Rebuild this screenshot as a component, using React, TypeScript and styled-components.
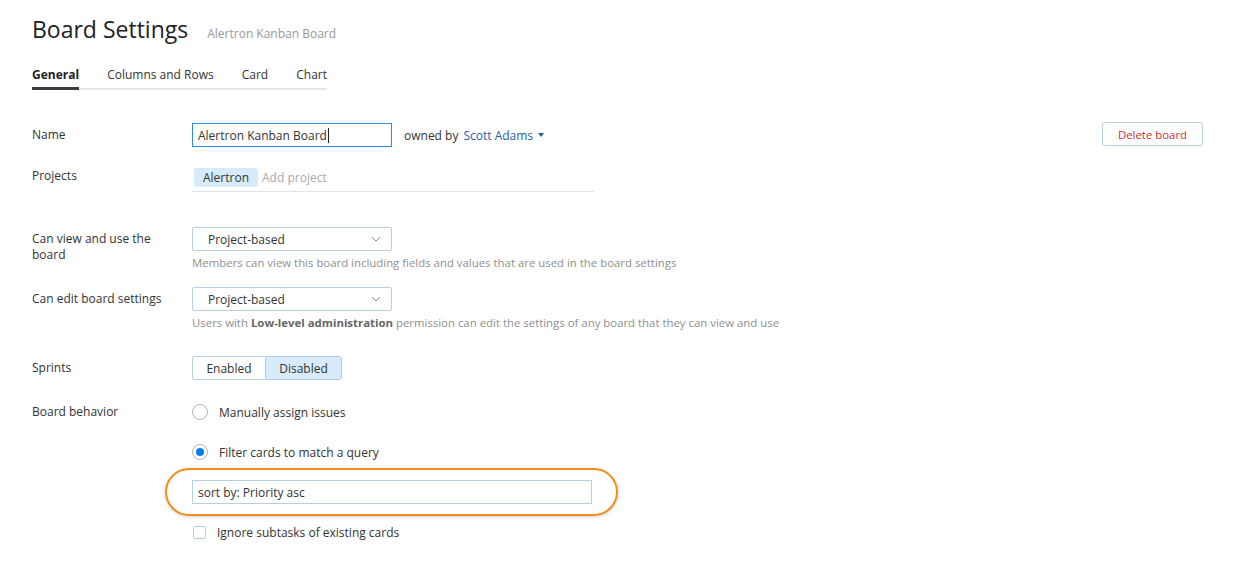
import styled, { createGlobalStyle } from 'styled-components';

const GlobalStyle = createGlobalStyle`
  body {
    margin: 0;
    background: #fff;
    font-family: 'Open Sans', 'Noto Sans', sans-serif;
    color: #333;
  }
`;

const Page = styled.div`
  padding: 14px 32px 30px 32px;
  font-size: 12px;
`;

const Header = styled.div`
  display: flex;
  align-items: baseline;
  gap: 19px;
`;

const Title = styled.h1`
  margin: 0;
  font-size: 23px;
  font-weight: 400;
  line-height: 30px;
  color: #222;
`;

const Subtitle = styled.span`
  font-size: 12px;
  color: #999;
`;

const TabList = styled.div`
  display: flex;
  gap: 28px;
  width: fit-content;
  margin-top: 22px;
  border-bottom: 2px solid #e6e6e6;
`;

const Tab = styled.div<{ $active?: boolean }>`
  font-size: 12px;
  line-height: 18px;
  white-space: nowrap;
  padding-bottom: 3px;
  margin-bottom: -2px;
  border-bottom: 3px solid ${(p) => (p.$active ? '#3d3d3d' : 'transparent')};
  font-weight: ${(p) => (p.$active ? 700 : 400)};
  color: ${(p) => (p.$active ? '#222' : '#333')};
`;

const Form = styled.div`
  margin-top: 33px;
  display: flex;
  flex-direction: column;
`;

const Row = styled.div<{ $gap: number }>`
  display: grid;
  grid-template-columns: 160px 1fr auto;
  align-items: start;
  margin-top: ${(p) => p.$gap}px;
`;

const Label = styled.div<{ $pad?: number }>`
  font-size: 12px;
  line-height: 16px;
  padding-top: ${(p) => p.$pad ?? 4}px;
  color: #333;
  width: 130px;
`;

const Control = styled.div`
  display: flex;
  flex-direction: column;
`;

const Inline = styled.div`
  display: flex;
  align-items: center;
  gap: 12px;
`;

const TextInput = styled.div<{ $focused?: boolean; $width: number }>`
  box-sizing: border-box;
  width: ${(p) => p.$width}px;
  height: 24px;
  border: 1px solid ${(p) => (p.$focused ? '#2a8de0' : '#b5cfe3')};
  padding: 0 5px;
  display: flex;
  align-items: center;
  font-size: 12px;
  color: #333;
  background: #fff;
`;

const Caret = styled.span`
  display: inline-block;
  width: 1px;
  height: 15px;
  background: #222;
  margin-left: 1px;
`;

const Owner = styled.span`
  color: #333;
  display: flex;
  align-items: center;
  gap: 5px;
`;

const Link = styled.span`
  color: #1f62a8;
`;

const DeleteButton = styled.button`
  box-sizing: border-box;
  width: 101px;
  height: 24px;
  border: 1px solid #b7d0e6;
  border-radius: 3px;
  background: #fff;
  color: #c8303a;
  font-family: inherit;
  font-size: 11.4px;
  cursor: pointer;
  margin-top: -1px;
`;

const TagInput = styled.div`
  width: 400px;
  display: flex;
  align-items: center;
  gap: 4px;
  padding: 2px 0 4px 2px;
  border-bottom: 1px solid #dde3ea;
`;

const Tag = styled.span`
  background: #d7ebfa;
  border-radius: 3px;
  padding: 0 9px;
  line-height: 19px;
  color: #333;
`;

const Placeholder = styled.span`
  color: #aaa;
`;

const Select = styled.div`
  box-sizing: border-box;
  width: 200px;
  height: 24px;
  border: 1px solid #b7d0e6;
  border-radius: 2px;
  padding: 0 10px 0 15px;
  display: flex;
  align-items: center;
  justify-content: space-between;
  color: #333;
`;

const Help = styled.div`
  margin-top: 5px;
  font-size: 11.4px;
  line-height: 14px;
  color: #8f8f8f;

  b {
    color: #666;
    font-weight: 700;
  }
`;

const Toggle = styled.div`
  display: flex;
`;

const ToggleButton = styled.div<{ $active?: boolean; $width: number }>`
  box-sizing: border-box;
  width: ${(p) => p.$width}px;
  height: 24px;
  display: flex;
  align-items: center;
  justify-content: center;
  border: 1px solid ${(p) => (p.$active ? '#a9cdeb' : '#b7d0e6')};
  background: ${(p) => (p.$active ? '#d7ebfa' : '#fff')};
  color: #333;

  &:first-child {
    border-radius: 3px 0 0 3px;
    border-right: none;
  }
  &:last-child {
    border-radius: 0 3px 3px 0;
  }
`;

const Options = styled.div`
  display: flex;
  flex-direction: column;
`;

const Option = styled.div<{ $gap?: number }>`
  display: flex;
  align-items: center;
  gap: 11px;
  height: 20px;
  margin-top: ${(p) => p.$gap ?? 0}px;
  font-size: 12px;
`;

const Radio = styled.span<{ $checked?: boolean }>`
  box-sizing: border-box;
  width: 16px;
  height: 16px;
  border-radius: 50%;
  border: 1px solid #b3b3b3;
  display: flex;
  align-items: center;
  justify-content: center;

  &::after {
    content: '';
    width: 8px;
    height: 8px;
    border-radius: 50%;
    background: ${(p) => (p.$checked ? '#0a7cf5' : 'transparent')};
  }
`;

const Checkbox = styled.span`
  box-sizing: border-box;
  width: 13px;
  height: 13px;
  margin-left: 1px;
  border: 1px solid #b7cfe4;
  border-radius: 2px;
`;

const QueryWrap = styled.div`
  position: relative;
  margin-top: 18px;
  width: 400px;
`;

const Highlight = styled.div`
  position: absolute;
  inset: -12px -26px -12px -27px;
  border: 2px solid #f58a1f;
  border-radius: 24px;
  box-shadow: 0 1px 3px rgba(0, 0, 0, 0.18);
  pointer-events: none;
`;

const Chevron = () => (
  <svg width="10" height="6" viewBox="0 0 10 6">
    <path d="M1 1l4 4 4-4" fill="none" stroke="#8a8a8a" strokeWidth="1" />
  </svg>
);

const Caretdown = () => (
  <svg width="6" height="4" viewBox="0 0 6 4">
    <path d="M0 0h6L3 4z" fill="#1f62a8" />
  </svg>
);

export default function App() {
  return (
    <Page>
      <GlobalStyle />
      <Header>
        <Title>Board Settings</Title>
        <Subtitle>Alertron Kanban Board</Subtitle>
      </Header>
      <TabList>
        <Tab $active>General</Tab>
        <Tab>Columns and Rows</Tab>
        <Tab>Card</Tab>
        <Tab>Chart</Tab>
      </TabList>

      <Form>
        <Row $gap={0}>
          <Label>Name</Label>
          <Inline>
            <TextInput $focused $width={200}>
              Alertron Kanban Board<Caret />
            </TextInput>
            <Owner>
              owned by <Link>Scott Adams</Link>
              <Caretdown />
            </Owner>
          </Inline>
          <DeleteButton>Delete board</DeleteButton>
        </Row>

        <Row $gap={19}>
          <Label $pad={2}>Projects</Label>
          <Control>
            <TagInput>
              <Tag>Alertron</Tag>
              <Placeholder>Add project</Placeholder>
            </TagInput>
          </Control>
        </Row>

        <Row $gap={35}>
          <Label>Can view and use the board</Label>
          <Control>
            <Select>
              Project-based
              <Chevron />
            </Select>
            <Help>Members can view this board including fields and values that are used in the board settings</Help>
          </Control>
        </Row>

        <Row $gap={17}>
          <Label>Can edit board settings</Label>
          <Control>
            <Select>
              Project-based
              <Chevron />
            </Select>
            <Help>
              Users with <b>Low-level administration</b> permission can edit the settings of any board that they can view and use
            </Help>
          </Control>
        </Row>

        <Row $gap={26}>
          <Label>Sprints</Label>
          <Toggle>
            <ToggleButton $width={73}>Enabled</ToggleButton>
            <ToggleButton $width={77} $active>
              Disabled
            </ToggleButton>
          </Toggle>
        </Row>

        <Row $gap={22}>
          <Label $pad={2}>Board behavior</Label>
          <Options>
            <Option>
              <Radio />
              Manually assign issues
            </Option>
            <Option $gap={20}>
              <Radio $checked />
              Filter cards to match a query
            </Option>
            <QueryWrap>
              <TextInput $width={400}>sort by: Priority asc</TextInput>
              <Highlight />
            </QueryWrap>
            <Option $gap={18}>
              <Checkbox />
              Ignore subtasks of existing cards
            </Option>
          </Options>
        </Row>
      </Form>
    </Page>
  );
}
